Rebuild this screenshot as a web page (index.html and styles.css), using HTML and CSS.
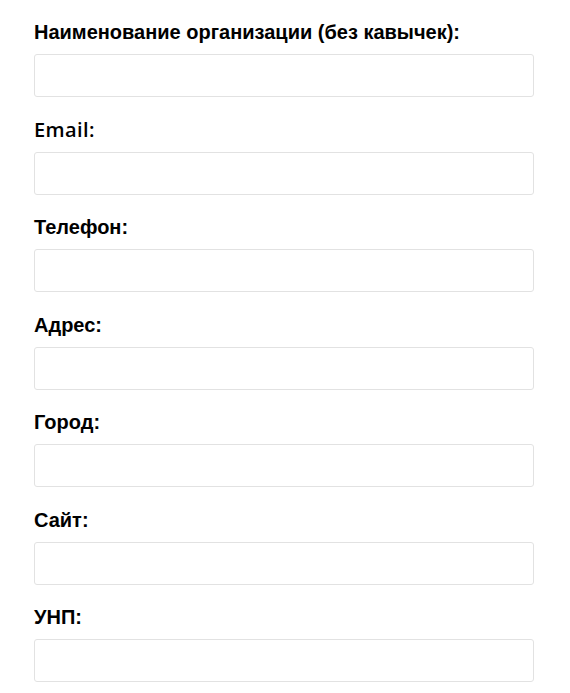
FILE: index.html
```html
<!DOCTYPE html>
<html lang="ru">
<head>
<meta charset="utf-8">
<title>Form</title>
<link rel="stylesheet" href="styles.css">
</head>
<body>
<form class="form">
  <div class="field">
    <label class="label">Наименование организации (без кавычек):</label>
    <input class="input" type="text">
  </div>
  <div class="field">
    <label class="label label-latin">Email:</label>
    <input class="input" type="email">
  </div>
  <div class="field">
    <label class="label">Телефон:</label>
    <input class="input" type="text">
  </div>
  <div class="field">
    <label class="label">Адрес:</label>
    <input class="input" type="text">
  </div>
  <div class="field">
    <label class="label">Город:</label>
    <input class="input" type="text">
  </div>
  <div class="field">
    <label class="label">Сайт:</label>
    <input class="input" type="text">
  </div>
  <div class="field">
    <label class="label">УНП:</label>
    <input class="input" type="text">
  </div>
</form>
</body>
</html>
```
FILE: styles.css
```css
html, body {
  margin: 0;
  padding: 0;
  background: #fff;
}
.form {
  display: flex;
  flex-direction: column;
  gap: 20.5px;
  padding: 20px 36px 0 34px;
  width: 500px;
}
.field {
  display: flex;
  flex-direction: column;
  gap: 10px;
}
.label {
  font-family: "Liberation Sans", Arial, sans-serif;
  font-weight: bold;
  font-size: 20px;
  line-height: 24px;
  color: #000;
}
.label-latin {
  font-family: "Open Sans", "Liberation Sans", sans-serif;
  font-weight: 600;
  font-size: 20px;
  letter-spacing: 0.4px;
}
.input {
  box-sizing: border-box;
  width: 500px;
  height: 43px;
  margin: 0;
  border: 1px solid #e2e2e2;
  border-radius: 3px;
  background: #fff;
  outline: none;
}
```
